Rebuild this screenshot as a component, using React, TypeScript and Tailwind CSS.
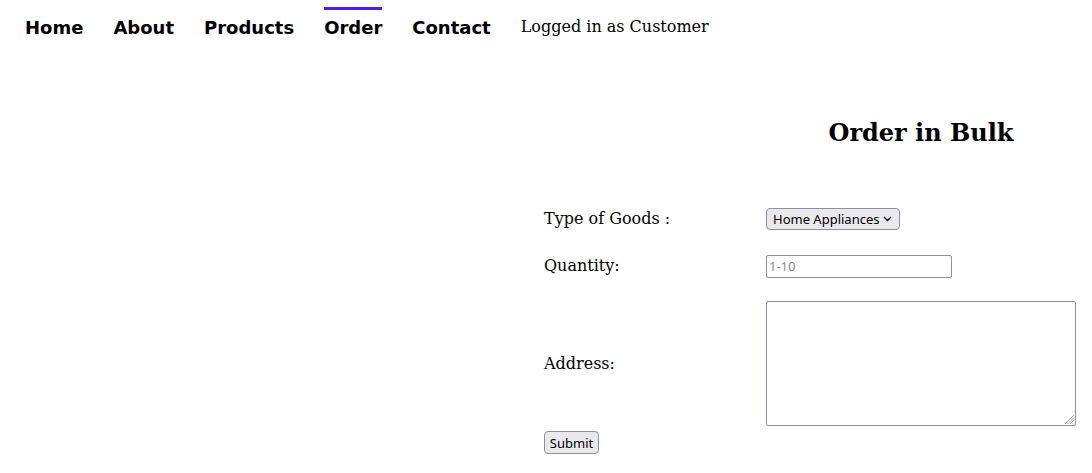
import { useState } from 'react'

const navLinks = ['Home', 'About', 'Products', 'Order', 'Contact']

export default function App() {
  const [goods, setGoods] = useState('Home Appliances')
  const [qty, setQty] = useState('')
  const [address, setAddress] = useState('')

  return (
    <div className="min-h-screen bg-white text-black font-['DejaVu_Serif',serif]">
      {/* top nav */}
      <nav className="flex items-start pl-[25px] pt-[7px]">
        {navLinks.map((l) => (
          <a
            key={l}
            href="#"
            className={`mr-[30px] border-t-[3px] pt-[7px] font-['DejaVu_Sans',sans-serif] text-[18px] leading-[21px] font-bold ${
              l === 'Order' ? 'border-[#4b1ee8]' : 'border-transparent'
            }`}
          >
            {l}
          </a>
        ))}
        <span className="pt-[10px] text-[16px] leading-[19px]">Logged in as Customer</span>
      </nav>

      {/* right column with the form */}
      <div className="flex">
        <div className="w-[544px] shrink-0" />
        <div>
          <div className="grid grid-cols-[222px_310px] mt-[81px]">
            <div />
            <h2 className="text-center text-[24px] leading-[28px] font-bold">Order in Bulk</h2>
          </div>

          <form className="mt-[59px]" onSubmit={(e) => e.preventDefault()}>
            <div className="grid grid-cols-[222px_310px] items-center gap-y-[23px] text-[16px]">
              <label className="pt-[1px]">Type of Goods :</label>
              <div className="relative w-[134px]">
                <select
                  value={goods}
                  onChange={(e) => setGoods(e.target.value)}
                  className="appearance-none block w-[134px] h-[22px] rounded-[4px] border border-[#8f8f9d] bg-[#e9e9ed] pl-[6px] font-['Noto_Sans',sans-serif] text-[13px] leading-[20px]"
                >
                  <option>Home Appliances</option>
                  <option>Electronics</option>
                  <option>Furniture</option>
                </select>
                <svg className="pointer-events-none absolute right-[8px] top-[8px]" width="9" height="6" viewBox="0 0 9 6">
                  <path d="M1 1l3.5 3.5L8 1" fill="none" stroke="#000" strokeWidth="1.4" />
                </svg>
              </div>

              <label>Quantity:</label>
              <input
                value={qty}
                onChange={(e) => setQty(e.target.value)}
                placeholder="1-10"
                className="block w-[186px] h-[23px] rounded-[2px] border border-[#8f8f9d] px-[2px] font-['Noto_Sans',sans-serif] text-[13px] placeholder:text-[#8d8d8d] outline-none"
              />

              <label>Address:</label>
              <div className="relative w-[310px] h-[125px]">
                <textarea
                  value={address}
                  onChange={(e) => setAddress(e.target.value)}
                  className="block w-[310px] h-[125px] resize-none rounded-[2px] border border-[#8f8f9d] p-[2px] font-['Noto_Sans',sans-serif] text-[13px] outline-none"
                />
                {/* firefox-style resize grip */}
                <svg className="pointer-events-none absolute right-[2px] bottom-[2px]" width="10" height="10" viewBox="0 0 10 10">
                  <path d="M10 1L1 10M10 3.5L3.5 10M10 6L6 10M10 8.5L8.5 10" stroke="#9a9a9a" strokeWidth="0.8" />
                </svg>
              </div>
            </div>

            <button
              type="submit"
              className="mt-[5px] w-[55px] h-[23px] rounded-[4px] border border-[#8f8f9d] bg-[#e9e9ed] font-['Noto_Sans',sans-serif] text-[13px] leading-[20px]"
            >
              Submit
            </button>
          </form>
        </div>
      </div>
    </div>
  )
}
